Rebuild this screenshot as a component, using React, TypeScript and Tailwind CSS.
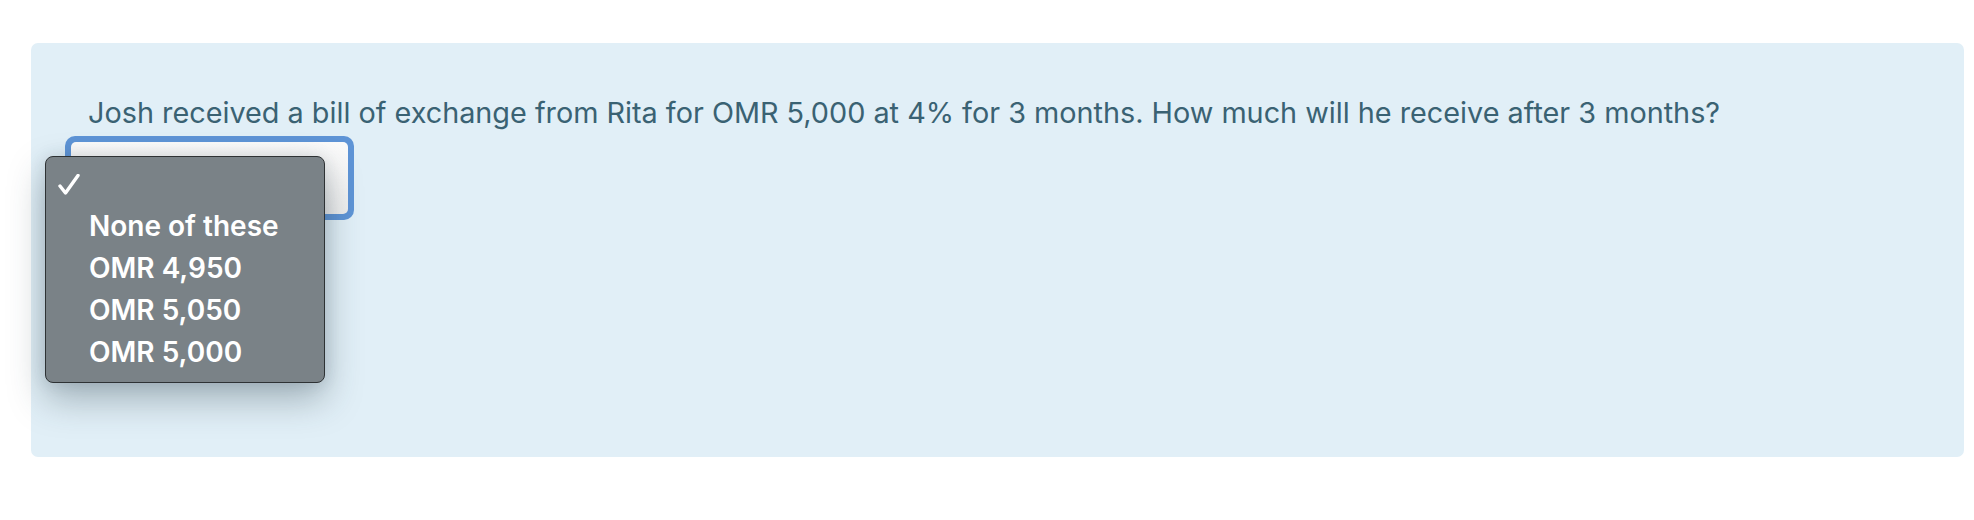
import React from "react";

export default function App() {
  const options = ["None of these", "OMR 4,950", "OMR 5,050", "OMR 5,000"];
  return (
    <div className="w-[1974px] h-[520px] bg-white pt-[43px] pl-[31px] pr-[10px]" style={{ fontFamily: "Inter, 'Noto Sans', sans-serif" }}>
      <div className="h-[414px] rounded-[7px] bg-[#e1eff7] pl-[34px] pt-[50px]">
        <p className="ml-[23px] text-[28.8px] leading-[40px] text-[#3a6273]">
          Josh received a bill of exchange from Rita for OMR 5,000 at 4% for 3 months. How much will he receive after 3 months?
        </p>
        <div className="relative mt-[3px] w-[289px] h-[84px]">
          <div className="w-full h-full rounded-[10px] bg-[#5e94d6] p-[6px]">
            <div className="w-full h-full rounded-[5px] bg-gradient-to-b from-[#fbfbfb] to-[#eeeeee]" />
          </div>
          <div className="absolute left-[-20px] top-[20px] w-[280px] h-[227px] rounded-[8px] border border-[#2e3234] bg-[#7a8287] pt-[6px] shadow-[0_16px_36px_rgba(40,60,70,0.35),0_0_16px_rgba(40,60,70,0.12)]">
            <div className="flex h-[42px] items-center pl-[12px]">
              <svg width="22" height="21" viewBox="0 0 22 21" fill="none">
                <path d="M2 12 L7.5 19 L20 1.5" stroke="white" strokeWidth="3.4" strokeLinecap="round" strokeLinejoin="round" />
              </svg>
            </div>
            {options.map((o) => (
              <div key={o} className="flex h-[42px] items-center pl-[43px] text-[28px] font-semibold text-white">
                {o}
              </div>
            ))}
          </div>
        </div>
      </div>
    </div>
  );
}
